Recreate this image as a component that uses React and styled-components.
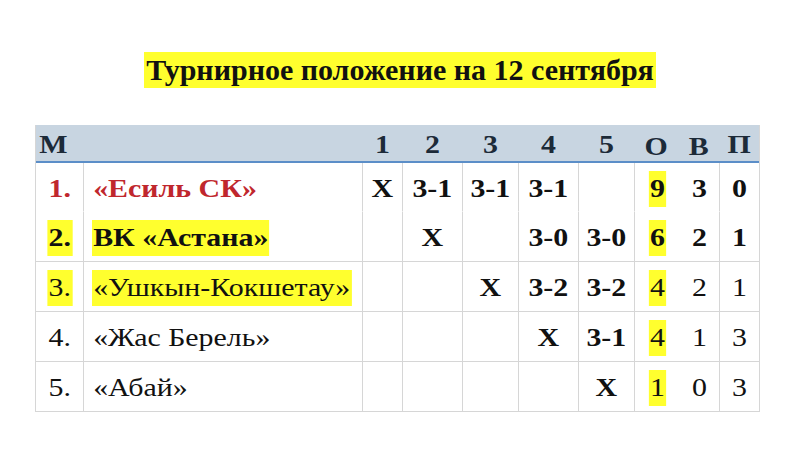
import React from "react";
import styled, { createGlobalStyle, css } from "styled-components";

const serif = css`
  font-family: "Liberation Serif", "Times New Roman", serif;
`;

const Global = createGlobalStyle`
  html, body { margin: 0; padding: 0; background: #fff; }
`;

const Page = styled.div`
  ${serif};
  width: 800px;
  height: 451px;
  padding-top: 52px;
  box-sizing: border-box;
  display: flex;
  flex-direction: column;
  align-items: center;
  color: #111;
`;

const Title = styled.div`
  ${serif};
  font-size: 30px;
  font-weight: 700;
  line-height: 36px;
  background: #ffff2e;
  padding: 0 2px;
  color: #111;
`;

const Table = styled.div`
  ${serif};
  margin-top: 37px;
  margin-left: 35px;
  align-self: flex-start;
  display: grid;
  grid-template-columns: 47px 279px 40px 60px 56px 60px 56px 85px 40px;
  border-left: 1px solid #d6d6d6;
  border-right: 1px solid #d6d6d6;
`;

const HeadCell = styled.div`
  ${serif};
  background: #c8d5e1;
  height: 38px;
  box-sizing: border-box;
  border-bottom: 2px solid #5b8ec8;
  display: ${(p) => (p.$split ? "grid" : "flex")};
  grid-template-columns: 44px 41px;
  align-items: center;
  justify-items: center;
  justify-content: ${(p) => (p.$left ? "flex-start" : "center")};
  padding: ${(p) => (p.$left ? "4px 0 0 2px" : "4px 0 0")};
  font-size: 26px;
  font-weight: 700;
  color: #1c2a38;
`;

const Cell = styled.div`
  ${serif};
  height: ${(p) => (p.$tall ? 50 : 49)}px;
  box-sizing: border-box;
  border-bottom: ${(p) => (p.$joined ? "1px solid transparent" : "1px solid #d6d6d6")};
  border-left: ${(p) => (p.$first ? "none" : "1px solid #d6d6d6")};
  display: ${(p) => (p.$split ? "grid" : "flex")};
  grid-template-columns: 44px 40px;
  align-items: center;
  justify-items: center;
  justify-content: ${(p) => (p.$left ? "flex-start" : "center")};
  padding: ${(p) => (p.$left ? "3px 0 0 8px" : "3px 0 0")};
  font-size: 26px;
  font-weight: ${(p) => (p.$bold ? 700 : 400)};
  color: ${(p) => (p.$red ? "#c0272d" : "#111")};
  white-space: nowrap;
`;

const Mark = styled.span`
  ${serif};
  display: inline-block;
  line-height: 36px;
  background: ${(p) => (p.$on ? "#ffff2e" : "transparent")};
  padding: 0 1px;
  transform: scaleX(1.15);
  transform-origin: ${(p) => (p.$start ? "left center" : "center")};
`;

const rows = [
  { n: "1.", team: "«Есиль СК»", red: true, bold: true, hlNum: false, hlTeam: false, res: ["X", "3-1", "3-1", "3-1", ""], o: "9", v: "3", p: "0", statBold: true, joined: true },
  { n: "2.", team: "ВК «Астана»", bold: true, hlNum: true, hlTeam: true, res: ["", "X", "", "3-0", "3-0"], o: "6", v: "2", p: "1", statBold: true },
  { n: "3.", team: "«Ушкын-Кокшетау»", hlNum: true, hlTeam: true, res: ["", "", "X", "3-2", "3-2"], o: "4", v: "2", p: "1" },
  { n: "4.", team: "«Жас Берель»", res: ["", "", "", "X", "3-1"], o: "4", v: "1", p: "3" },
  { n: "5.", team: "«Абай»", res: ["", "", "", "", "X"], o: "1", v: "0", p: "3" },
];

const heads = ["1", "2", "3", "4", "5"];

export default function App() {
  return (
    <>
      <Global />
      <Page>
        <Title>Турнирное положение на 12 сентября</Title>
        <Table>
          <HeadCell $left>
            <Mark $start>М</Mark>
          </HeadCell>
          <HeadCell />
          {heads.map((h) => (
            <HeadCell key={h}>
              <Mark>{h}</Mark>
            </HeadCell>
          ))}
          <HeadCell $split>
            <Mark>О</Mark>
            <Mark>В</Mark>
          </HeadCell>
          <HeadCell>
            <Mark>П</Mark>
          </HeadCell>
          {rows.map((r, i) => {
            const j = !!r.joined;
            const tall = i > 0;
            return (
              <React.Fragment key={r.n}>
                <Cell $first $joined={j} $tall={tall} $bold={r.bold} $red={r.red}>
                  <Mark $on={r.hlNum}>{r.n}</Mark>
                </Cell>
                <Cell $left $joined={j} $tall={tall} $bold={r.bold} $red={r.red}>
                  <Mark $start $on={r.hlTeam}>{r.team}</Mark>
                </Cell>
                {r.res.map((x, k) => (
                  <Cell key={k} $joined={j} $tall={tall} $bold>
                    {x && <Mark>{x}</Mark>}
                  </Cell>
                ))}
                <Cell $split $joined={j} $tall={tall} $bold={r.statBold}>
                  <Mark $on>{r.o}</Mark>
                  <Mark>{r.v}</Mark>
                </Cell>
                <Cell $joined={j} $tall={tall} $bold={r.statBold}>
                  <Mark>{r.p}</Mark>
                </Cell>
              </React.Fragment>
            );
          })}
        </Table>
      </Page>
    </>
  );
}
